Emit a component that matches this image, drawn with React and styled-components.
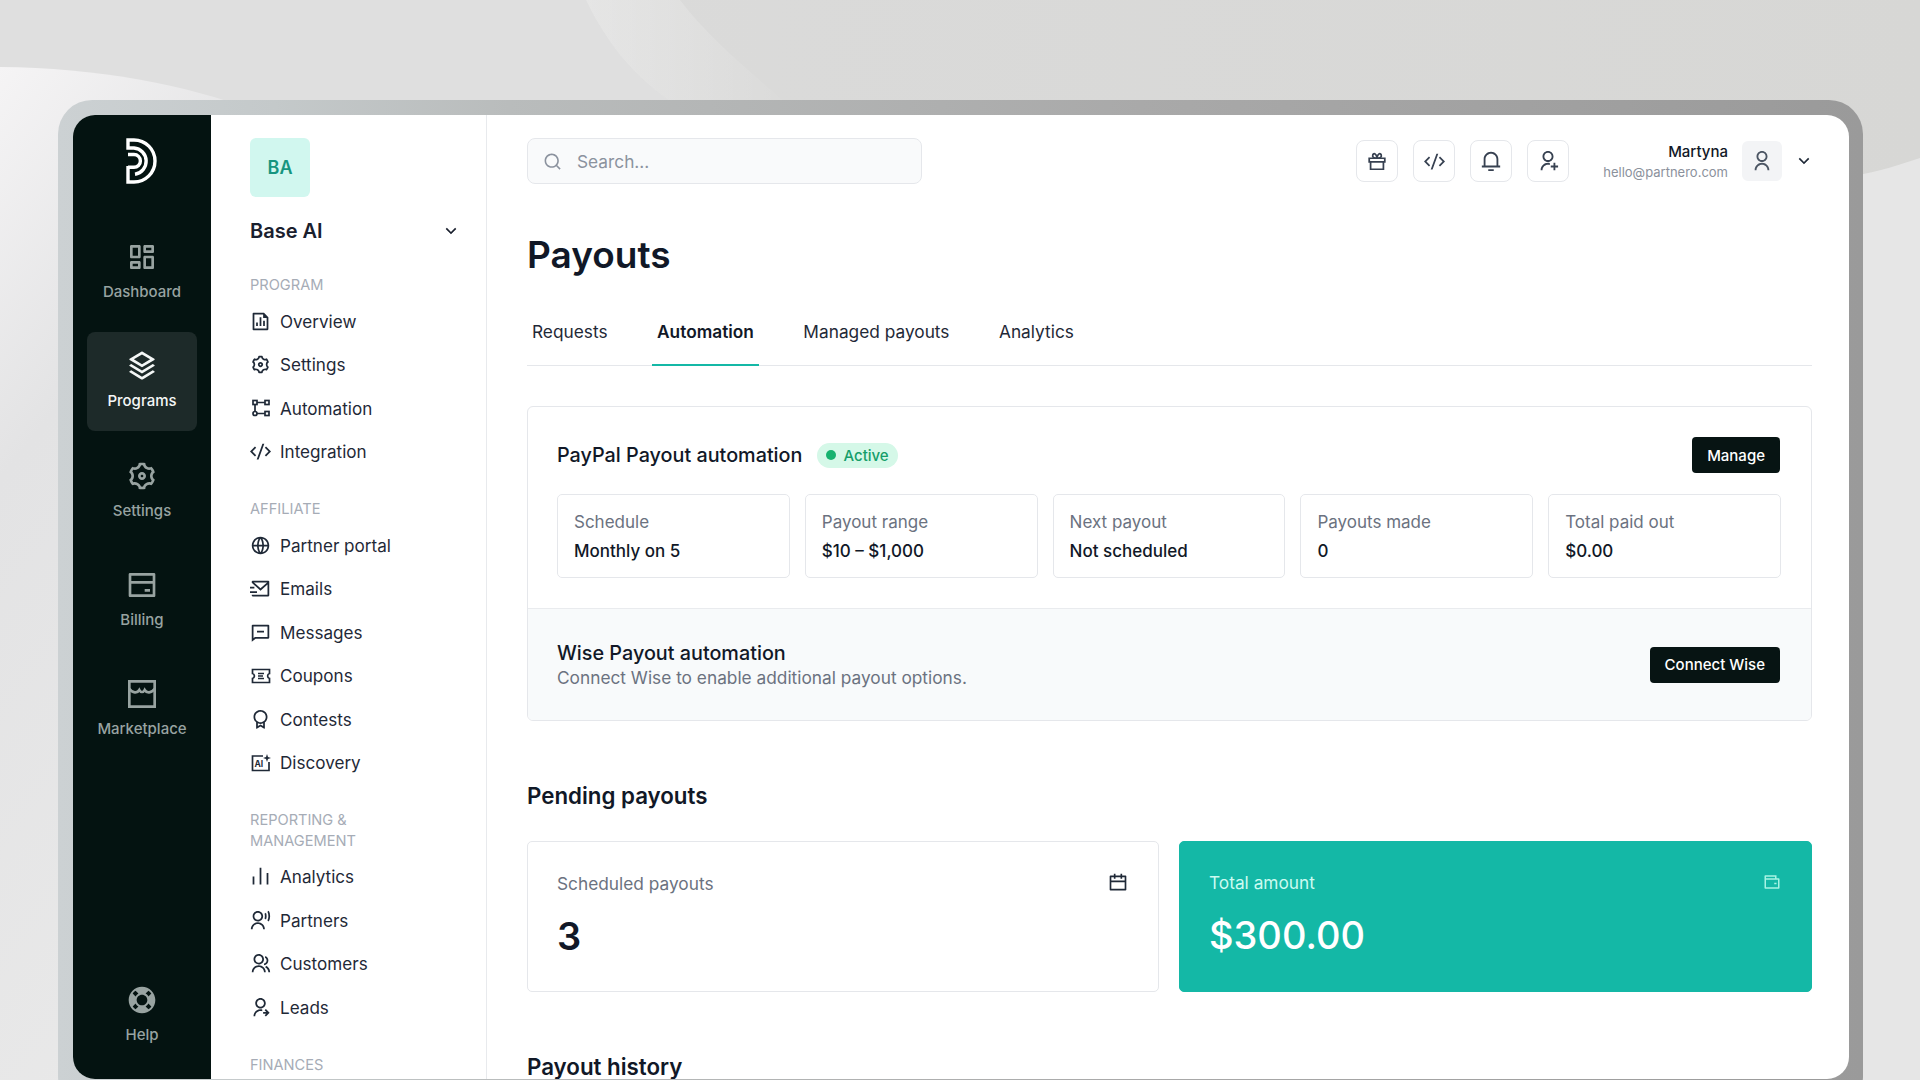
import React from 'react'
import styled, { createGlobalStyle } from 'styled-components'
import {
  RiDashboardLine,
  RiStackLine,
  RiSettings3Line,
  RiBankCardLine,
  RiLifebuoyFill,
  RiArrowDownSLine,
  RiFileChartLine,
  RiCodeSSlashLine,
  RiGlobalLine,
  RiMailSendLine,
  RiMessageLine,
  RiAwardLine,
  RiBarChartLine,
  RiUserVoiceLine,
  RiGroupLine,
  RiUserSharedLine,
  RiSearchLine,
  RiNotification3Line,
  RiUserAddLine,
  RiUserLine,
  RiCalendarLine,
  RiWalletLine,
} from 'react-icons/ri'

const GlobalStyle = createGlobalStyle`
  html, body {
    margin: 0;
    padding: 0;
    height: 1080px;
    overflow: hidden;
  }

  * {
    box-sizing: border-box;
  }

  body {
    font-family: Inter, "Liberation Sans", sans-serif;
    color: #111827;
  }
`

const Logo = () => (
  <svg width="32" height="46" viewBox="0 0 32 46" fill="none" stroke="#fff" strokeWidth="3.4">
    <path d="M2 28V44H8A21 21 0 0 0 8 2H2V10H8A13.2 13.2 0 0 1 9 36.2" />
    <path d="M2 16.5H8A6.4 6.4 0 0 1 8 29.3H2" />
  </svg>
)

const StoreIcon = ({ size }) => (
  <svg width={size} height={size} viewBox="0 0 24 24" fill="none" stroke="currentColor" strokeWidth="2">
    <path d="M2.5 2.5H21.5V21.5H2.5Z" />
    <path d="M2.5 8C5 11.5 8.5 11.5 10 9C11 11 13 11 14 9C15.5 11.5 19 11.5 21.5 8" />
  </svg>
)

const AutomationIcon = () => (
  <svg width="18" height="18" viewBox="0 0 18 18" fill="none" stroke="currentColor" strokeWidth="1.7">
    <rect x="1" y="1.5" width="4" height="4" />
    <rect x="13" y="1.5" width="4" height="4" />
    <rect x="13" y="12.5" width="4" height="4" />
    <circle cx="3" cy="14.5" r="2" />
    <path d="M5 3.5H13M3 5.5V12.5M5 14.5H13" />
  </svg>
)

const CouponIcon = () => (
  <svg width="20" height="18" viewBox="0 0 20 18" fill="none" stroke="currentColor" strokeWidth="1.7">
    <path d="M1.5 2.5H18.5V6.5A2.6 2.6 0 0 0 18.5 11.5V15.5H1.5V11.5A2.6 2.6 0 0 0 1.5 6.5Z" />
    <path d="M7 6.5H13M7 9H12M7 11.5H13" />
  </svg>
)

const DiscoveryIcon = () => (
  <svg width="20" height="18" viewBox="0 0 20 18" fill="none">
    <path d="M12 2H1.5V16.5H18V8" stroke="currentColor" strokeWidth="1.7" />
    <path d="M16 0L17 3L20 4L17 5L16 8L15 5L12 4L15 3Z" fill="currentColor" />
    <text x="3.4" y="13" fontFamily="Inter, sans-serif" fontSize="8.5" fontWeight="700" fill="currentColor">AI</text>
  </svg>
)

const GiftIcon = () => (
  <svg width="22" height="22" viewBox="0 0 24 24" fill="none" stroke="currentColor" strokeWidth="1.9">
    <path d="M3.5 9H20.5V13H3.5Z" />
    <path d="M5 13V21H19V13" />
    <path d="M12 9C8 9 6.8 7.5 7.4 5.4C8.4 3 11.6 3.6 12 9C12.4 3.6 15.6 3 16.6 5.4C17.2 7.5 16 9 12 9Z" />
  </svg>
)

const railTop = [
  { label: 'Dashboard', Icon: RiDashboardLine },
  { label: 'Programs', Icon: RiStackLine, active: true },
  { label: 'Settings', Icon: RiSettings3Line },
  { label: 'Billing', Icon: RiBankCardLine },
  { label: 'Marketplace', Icon: StoreIcon },
]

const navGroups = [
  {
    title: 'Program',
    items: [
      { label: 'Overview', Icon: RiFileChartLine },
      { label: 'Settings', Icon: RiSettings3Line },
      { label: 'Automation', Icon: AutomationIcon },
      { label: 'Integration', Icon: RiCodeSSlashLine },
    ],
  },
  {
    title: 'Affiliate',
    items: [
      { label: 'Partner portal', Icon: RiGlobalLine },
      { label: 'Emails', Icon: RiMailSendLine },
      { label: 'Messages', Icon: RiMessageLine },
      { label: 'Coupons', Icon: CouponIcon },
      { label: 'Contests', Icon: RiAwardLine },
      { label: 'Discovery', Icon: DiscoveryIcon },
    ],
  },
  {
    title: 'Reporting & Management',
    items: [
      { label: 'Analytics', Icon: RiBarChartLine },
      { label: 'Partners', Icon: RiUserVoiceLine },
      { label: 'Customers', Icon: RiGroupLine },
      { label: 'Leads', Icon: RiUserSharedLine },
    ],
  },
  { title: 'Finances', items: [] },
]

const stats = [
  { label: 'Schedule', value: 'Monthly on 5' },
  { label: 'Payout range', value: '$10 – $1,000' },
  { label: 'Next payout', value: 'Not scheduled' },
  { label: 'Payouts made', value: '0' },
  { label: 'Total paid out', value: '$0.00' },
]

const tabs = ['Requests', 'Automation', 'Managed payouts', 'Analytics']

const App = () => {
  return (
    <Page>
      <GlobalStyle />
      <Backdrop viewBox="0 0 1920 1080" preserveAspectRatio="none">
        <defs>
          <linearGradient id="sheen" x1="0" y1="0" x2="1" y2="0">
            <stop offset="0" stopColor="#fff" stopOpacity="0.3" />
            <stop offset="1" stopColor="#fff" stopOpacity="0" />
          </linearGradient>
          <linearGradient id="leftWave" x1="0" y1="0" x2="0.4" y2="1">
            <stop offset="0" stopColor="#f5f4f5" />
            <stop offset="0.35" stopColor="#e3e3e4" />
            <stop offset="1" stopColor="#e9e9e9" />
          </linearGradient>
        </defs>
        <path d="M0 0H586C615 60 650 90 692 115H0Z" fill="#dfdfdf" />
        <path d="M586 0C615 60 650 90 692 115H800C760 80 710 40 680 0Z" fill="url(#sheen)" />
        <path d="M0 67C100 68 190 85 263 114C300 130 330 150 330 1080H0Z" fill="url(#leftWave)" />
        <path d="M1920 158C1890 168 1870 174 1840 178V1080H1920Z" fill="#e6e6e6" />
      </Backdrop>

      <Frame>
        <Screen>
          <Rail>
            <LogoBox>
              <Logo />
            </LogoBox>
            <RailList>
              {railTop.map(({ label, Icon, active }) => (
                <RailItem key={label} $active={active}>
                  <Icon size={32} />
                  <span>{label}</span>
                </RailItem>
              ))}
            </RailList>
            <RailItem $push>
              <RiLifebuoyFill size={32} />
              <span>Help</span>
            </RailItem>
          </Rail>

          <Nav>
            <Avatar>BA</Avatar>
            <Workspace>
              Base AI
              <RiArrowDownSLine size={20} />
            </Workspace>
            {navGroups.map((group) => (
              <NavGroup key={group.title}>
                <GroupTitle>{group.title}</GroupTitle>
                {group.items.map(({ label, Icon }) => (
                  <NavItem key={label}>
                    <NavIcon>
                      <Icon size={21} />
                    </NavIcon>
                    {label}
                  </NavItem>
                ))}
              </NavGroup>
            ))}
          </Nav>

          <Main>
            <Topbar>
              <Search>
                <RiSearchLine size={19} />
                <span>Search...</span>
              </Search>
              <Actions>
                <IconButton><GiftIcon /></IconButton>
                <IconButton><RiCodeSSlashLine size={21} /></IconButton>
                <IconButton><RiNotification3Line size={22} /></IconButton>
                <IconButton><RiUserAddLine size={22} /></IconButton>
                <Account>
                  <strong>Martyna</strong>
                  <span>hello@partnero.com</span>
                </Account>
                <UserBox><RiUserLine size={22} /></UserBox>
                <RiArrowDownSLine size={20} />
              </Actions>
            </Topbar>

            <Title>Payouts</Title>

            <Tabs>
              {tabs.map((tab) => (
                <Tab key={tab} $active={tab === 'Automation'}>{tab}</Tab>
              ))}
            </Tabs>

            <AutomationCard>
              <PaypalPart>
                <CardHead>
                  <CardTitle>PayPal Payout automation</CardTitle>
                  <Badge>Active</Badge>
                  <DarkButton>Manage</DarkButton>
                </CardHead>
                <StatGrid>
                  {stats.map((stat) => (
                    <Stat key={stat.label}>
                      <span>{stat.label}</span>
                      <strong>{stat.value}</strong>
                    </Stat>
                  ))}
                </StatGrid>
              </PaypalPart>
              <WisePart>
                <div>
                  <CardTitle>Wise Payout automation</CardTitle>
                  <WiseText>Connect Wise to enable additional payout options.</WiseText>
                </div>
                <DarkButton>Connect Wise</DarkButton>
              </WisePart>
            </AutomationCard>

            <SectionTitle>Pending payouts</SectionTitle>
            <PendingGrid>
              <PendingCard>
                <PendingHead>
                  Scheduled payouts
                  <RiCalendarLine size={20} />
                </PendingHead>
                <PendingValue>3</PendingValue>
              </PendingCard>
              <PendingCard $accent>
                <PendingHead $accent>
                  Total amount
                  <RiWalletLine size={18} />
                </PendingHead>
                <PendingValue $accent>$300.00</PendingValue>
              </PendingCard>
            </PendingGrid>

            <SectionTitle>Payout history</SectionTitle>
          </Main>
        </Screen>
      </Frame>
    </Page>
  )
}

const Page = styled.div`
  position: relative;
  width: 1920px;
  height: 1080px;
  overflow: hidden;
  background: linear-gradient(90deg, #dcdcdc, #d7d7d5);
  padding: 100px 0 0 58px;
`

const Backdrop = styled.svg`
  position: absolute;
  inset: 0;
  width: 100%;
  height: 100%;
`

const Frame = styled.div`
  position: relative;
  width: 1805px;
  height: 1010px;
  padding: 15px 14px 0 15px;
  border-radius: 34px;
  background: linear-gradient(90deg, #ccd1d3 0%, #c4c9ca 12%, #b9bcbc 25%, #a9a9a9 60%, #9a9a9a 100%);
`

const Screen = styled.div`
  display: flex;
  height: 964px;
  overflow: hidden;
  background: #fff;
  border-radius: 22px;
`

const Rail = styled.aside`
  width: 138px;
  flex: none;
  display: flex;
  flex-direction: column;
  padding: 23px 14px 14px 14px;
  background: #041311;
`

const LogoBox = styled.div`
  height: 46px;
  margin-bottom: 39px;
  display: flex;
  justify-content: center;
`

const RailList = styled.div`
  display: flex;
  flex-direction: column;
  gap: 10.3px;
`

const RailItem = styled.div`
  height: 99px;
  flex: none;
  margin-top: ${(p) => (p.$push ? 'auto' : '0')};
  display: flex;
  flex-direction: column;
  align-items: center;
  padding-top: 18px;
  gap: 9px;
  border-radius: 8px;
  background: ${(p) => (p.$active ? '#1d2a29' : 'transparent')};
  color: ${(p) => (p.$active ? '#f4f7f6' : '#98a3a1')};
  font-size: 15px;
  line-height: 20px;
  font-weight: 500;

  svg {
    flex: none;
  }
`

const Nav = styled.nav`
  width: 276px;
  flex: none;
  padding: 23px 25px 0 39px;
  border-right: 1px solid #e8eaed;
`

const Avatar = styled.div`
  width: 60px;
  height: 59px;
  display: flex;
  align-items: center;
  justify-content: center;
  border-radius: 6px;
  background: #d1f7ef;
  color: #16957f;
  font-size: 18px;
  font-weight: 600;
`

const Workspace = styled.div`
  height: 40px;
  margin: 14px 0 23px;
  display: flex;
  align-items: center;
  justify-content: space-between;
  color: #1a202e;
  font-size: 20px;
  font-weight: 600;
`

const NavGroup = styled.div`
  margin-bottom: 24.5px;
`

const GroupTitle = styled.div`
  max-width: 150px;
  margin-bottom: 4px;
  padding-top: 1px;
  color: #a6acb6;
  font-size: 14.6px;
  line-height: 20.5px;
  text-transform: uppercase;
`

const NavItem = styled.div`
  height: 43.5px;
  display: flex;
  align-items: center;
  gap: 9px;
  color: #1f2937;
  font-size: 17.1px;
`

const NavIcon = styled.span`
  width: 21px;
  display: flex;
  justify-content: center;
  color: #1f2937;
`

const Main = styled.main`
  flex: 1;
  min-width: 0;
  padding: 23px 37px 0 40px;
`

const Topbar = styled.div`
  height: 46px;
  margin-right: -2px;
  display: flex;
  align-items: center;
  justify-content: space-between;
`

const Search = styled.div`
  width: 395px;
  height: 46px;
  display: flex;
  align-items: center;
  gap: 15px;
  padding: 0 15px;
  border: 1px solid #e5e7eb;
  border-radius: 8px;
  background: #f9fafb;
  color: #8b929e;
  font-size: 17.3px;
`

const Actions = styled.div`
  display: flex;
  align-items: center;
  color: #1f2937;
`

const IconButton = styled.div`
  width: 42px;
  height: 42px;
  margin-right: 15px;
  display: flex;
  align-items: center;
  justify-content: center;
  border: 1px solid #e5e7eb;
  border-radius: 8px;
  color: #374151;
`

const Account = styled.div`
  margin-left: 19px;
  padding-top: 1px;
  display: flex;
  flex-direction: column;
  align-items: flex-end;
  gap: 2px;

  strong {
    color: #111827;
    font-size: 15px;
    line-height: 18px;
    font-weight: 500;
  }

  span {
    color: #8b919c;
    font-size: 13px;
    line-height: 18px;
  }
`

const UserBox = styled.div`
  width: 40px;
  height: 40px;
  margin: 0 12px 0 14px;
  display: flex;
  align-items: center;
  justify-content: center;
  border-radius: 6px;
  background: #f3f4f6;
  color: #4b5563;
`

const Title = styled.h1`
  margin: 49px 0 0;
  color: #111827;
  font-size: 37px;
  line-height: 44px;
  font-weight: 600;
`

const Tabs = styled.div`
  margin-top: 21px;
  display: flex;
  gap: 39.5px;
  border-bottom: 1px solid #e5e7eb;
`

const Tab = styled.div`
  height: 68px;
  padding: 1px 5px 0;
  display: flex;
  align-items: center;
  margin-bottom: -1px;
  border-bottom: 2px solid ${(p) => (p.$active ? '#14b8a6' : 'transparent')};
  color: ${(p) => (p.$active ? '#111827' : '#1f2937')};
  font-size: 17.3px;
  font-weight: ${(p) => (p.$active ? 600 : 400)};
`

const AutomationCard = styled.section`
  margin-top: 40px;
  border: 1px solid #e5e7eb;
  border-radius: 6px;
  overflow: hidden;
`

const PaypalPart = styled.div`
  padding: 30px 30px 30px 29px;
  border-bottom: 1px solid #e9ebee;
`

const CardHead = styled.div`
  height: 36px;
  display: flex;
  align-items: center;
`

const CardTitle = styled.div`
  color: #111827;
  font-size: 19.8px;
  line-height: 26px;
  font-weight: 500;
`

const Badge = styled.div`
  height: 25px;
  margin-left: 15px;
  display: flex;
  align-items: center;
  gap: 7px;
  padding: 0 9px;
  border-radius: 13px;
  background: #d5f8e8;
  color: #169e6a;
  font-size: 15px;
  font-weight: 500;

  &::before {
    content: '';
    width: 10px;
    height: 10px;
    border-radius: 50%;
    background: #17b26f;
  }
`

const DarkButton = styled.button`
  height: 36px;
  margin-left: auto;
  margin-right: 1px;
  padding: 0 15px;
  border: none;
  border-radius: 4px;
  background: #071413;
  color: #fff;
  font-family: inherit;
  font-size: 15px;
  font-weight: 500;
`

const StatGrid = styled.div`
  margin-top: 21px;
  display: grid;
  grid-template-columns: repeat(5, 1fr);
  gap: 15px;
`

const Stat = styled.div`
  height: 84px;
  padding: 16px;
  display: flex;
  flex-direction: column;
  gap: 7px;
  border: 1px solid #e5e7eb;
  border-radius: 5px;
  font-size: 17px;
  line-height: 22px;

  span {
    color: #6b7280;
  }

  strong {
    color: #111827;
    font-weight: 500;
  }
`

const WisePart = styled.div`
  height: 111px;
  padding: 0 30px 0 29px;
  display: flex;
  align-items: center;
  background: #f8fafb;
`

const WiseText = styled.div`
  color: #6b7280;
  font-size: 17.3px;
  line-height: 24px;
`

const SectionTitle = styled.h2`
  height: 30px;
  margin: 60px 0 30px;
  color: #111827;
  font-size: 22.3px;
  line-height: 30px;
  font-weight: 600;
`

const PendingGrid = styled.div`
  display: grid;
  grid-template-columns: 632px 1fr;
  gap: 20px;
`

const PendingCard = styled.div`
  height: 151px;
  padding: ${(p) => (p.$accent ? '28px' : '29px')} 30px 0 29px;
  border: 1px solid ${(p) => (p.$accent ? '#14b8a6' : '#e5e7eb')};
  border-radius: 5px;
  background: ${(p) => (p.$accent ? '#14b8a6' : '#fff')};
`

const PendingHead = styled.div`
  height: 24px;
  display: flex;
  align-items: center;
  justify-content: space-between;
  color: ${(p) => (p.$accent ? '#ccfbf1' : '#6b7280')};
  font-size: 17.3px;

  svg {
    color: ${(p) => (p.$accent ? '#a7f3e4' : '#1f2937')};
  }
`

const PendingValue = styled.div`
  margin-top: 18px;
  color: ${(p) => (p.$accent ? '#fff' : '#111827')};
  font-size: 38px;
  line-height: 46px;
  font-weight: ${(p) => (p.$accent ? 500 : 600)};
`

export default App
